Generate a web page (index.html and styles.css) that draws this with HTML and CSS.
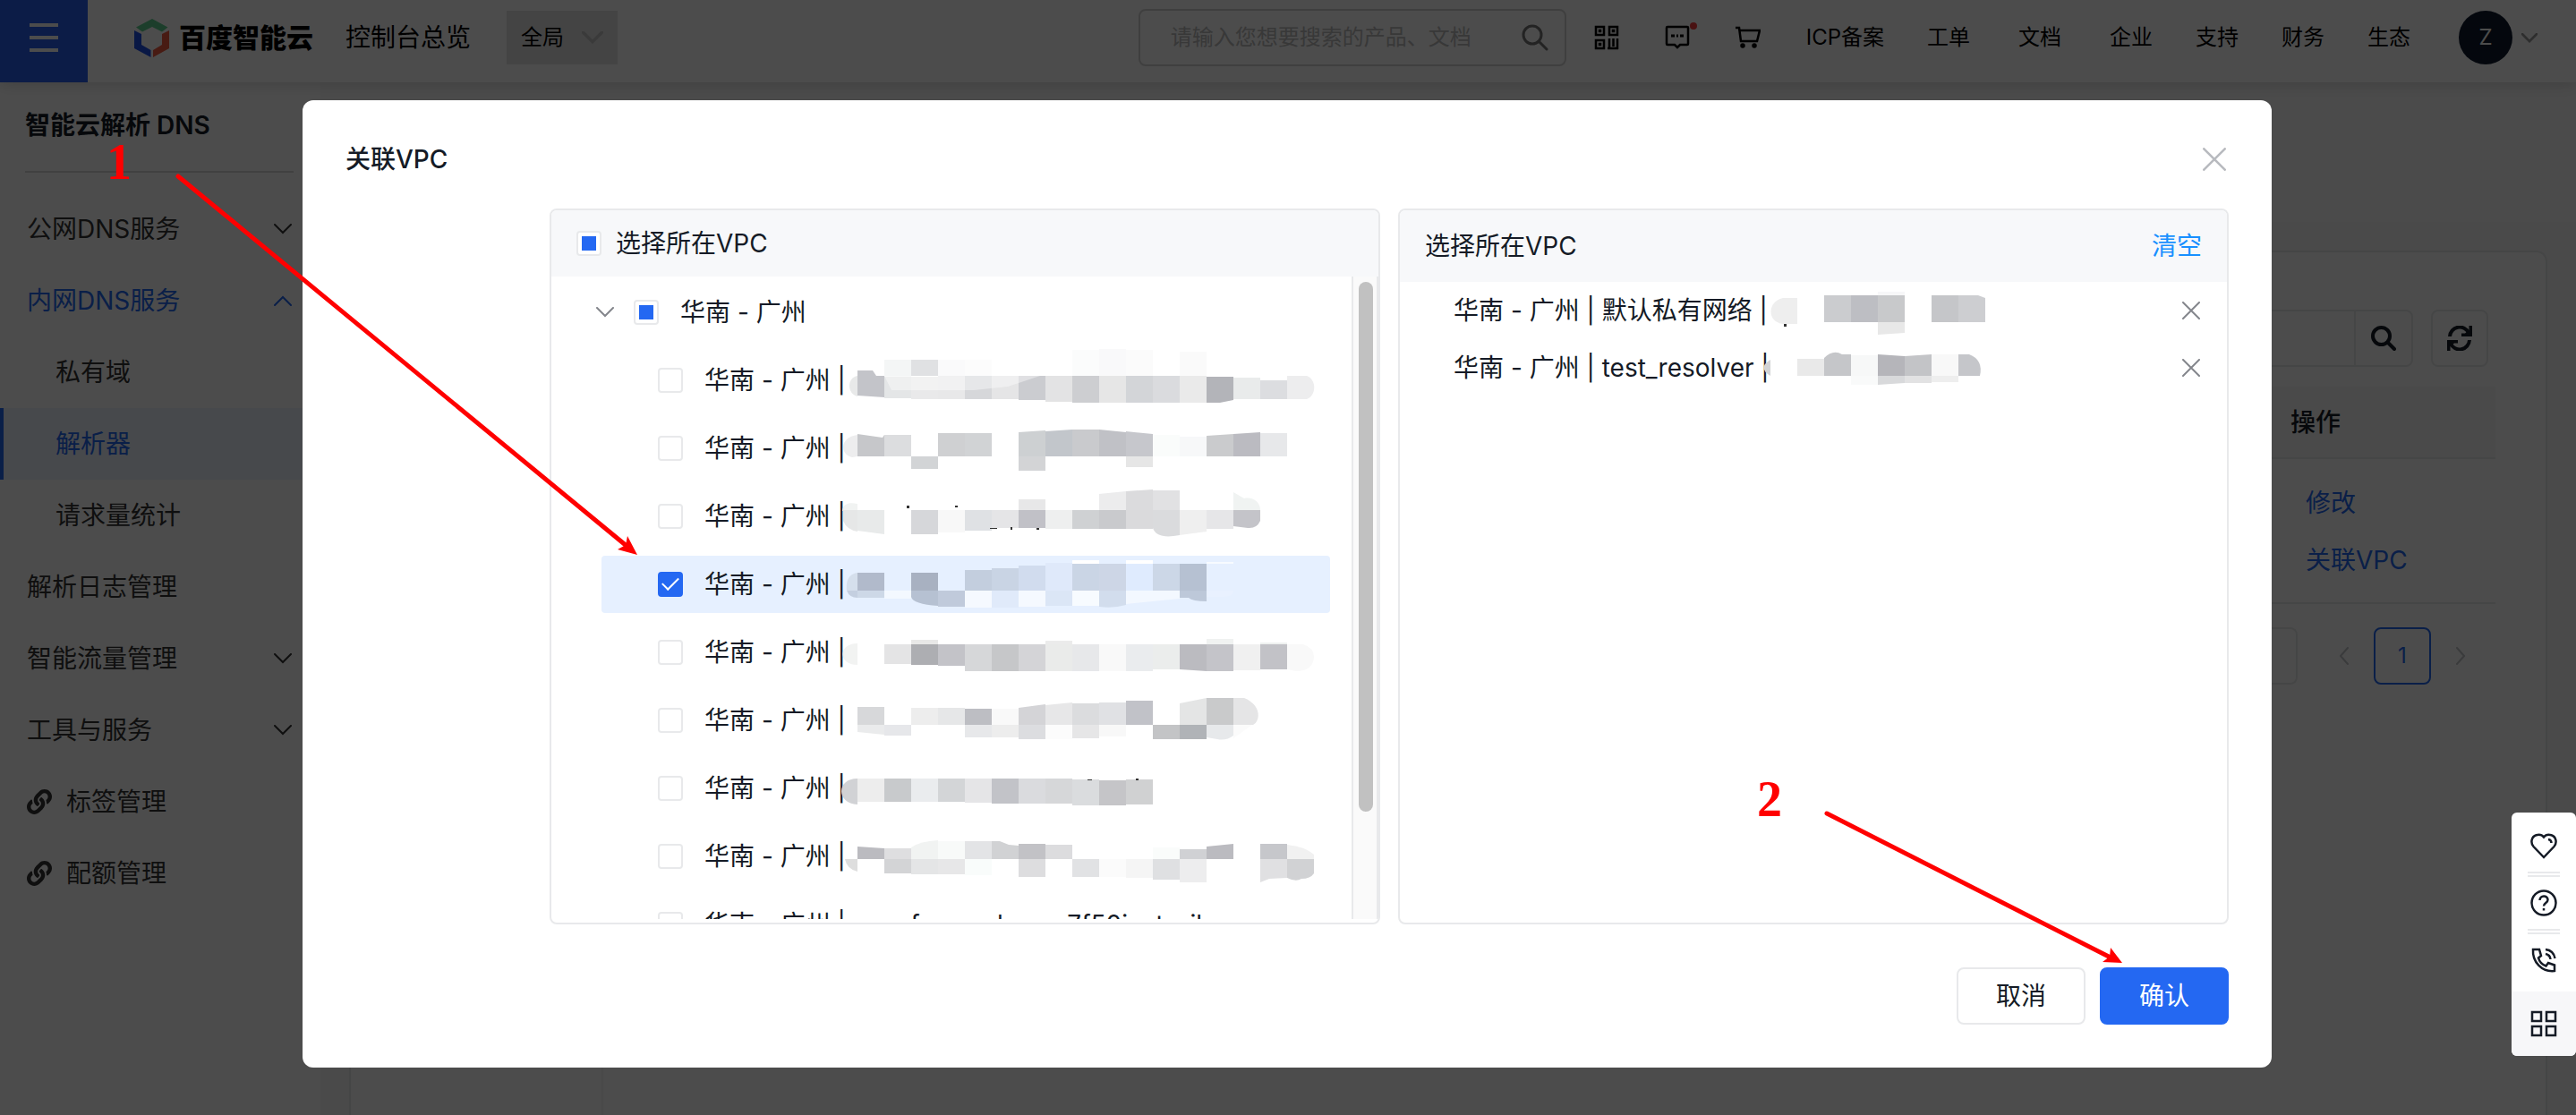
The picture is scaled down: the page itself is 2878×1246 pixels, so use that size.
FILE: index.html
```html
<!DOCTYPE html>
<html lang="zh-CN">
<head>
<meta charset="utf-8">
<meta name="viewport" content="width=device-width, initial-scale=1">
<title>智能云解析 DNS</title>
<link rel="stylesheet" href="styles.css">
</head>
<body>
    <!-- shared icons -->
    <svg class="sprite" aria-hidden="true">
        <symbol id="down" viewBox="0 0 20 12"><path d="M1 1l9 9 9-9"/></symbol>
        <symbol id="up" viewBox="0 0 20 12"><path d="M1 11l9-9 9 9"/></symbol>
        <symbol id="cross" viewBox="0 0 20 20"><path d="M1 1l18 18M19 1L1 19"/></symbol>
        <symbol id="link" viewBox="0 0 512 512"><path d="M326.612 185.391c59.747 59.809 58.927 155.698.36 214.59-.11.12-.24.25-.36.37l-67.2 67.2c-59.27 59.27-155.699 59.262-214.96 0-59.27-59.26-59.27-155.7 0-214.96l37.106-37.106c9.84-9.84 26.786-3.3 27.294 10.606.648 17.722 3.826 35.527 9.69 52.721 1.986 5.822.567 12.262-3.783 16.612l-13.087 13.087c-28.026 28.026-28.905 73.66-1.155 101.96 28.024 28.579 74.086 28.749 102.325.51l67.2-67.19c28.191-28.191 28.073-73.757 0-101.83-3.701-3.694-7.429-6.564-10.341-8.569a16.037 16.037 0 0 1-6.947-12.606c-.396-10.567 3.348-21.456 11.698-29.806l21.054-21.055c5.521-5.521 14.182-6.199 20.584-1.731a152.482 152.482 0 0 1 20.522 17.197zM467.547 44.449c-59.261-59.262-155.69-59.27-214.96 0l-67.2 67.2c-.12.12-.25.25-.36.37-58.566 58.892-59.387 154.781.36 214.59a152.454 152.454 0 0 0 20.521 17.196c6.402 4.468 15.064 3.789 20.584-1.731l21.054-21.055c8.35-8.35 12.094-19.239 11.698-29.806a16.037 16.037 0 0 0-6.947-12.606c-2.912-2.005-6.64-4.875-10.341-8.569-28.073-28.073-28.191-73.639 0-101.83l67.2-67.19c28.239-28.239 74.3-28.069 102.325.51 27.75 28.3 26.872 73.934-1.155 101.96l-13.087 13.087c-4.35 4.35-5.769 10.79-3.783 16.612 5.864 17.194 9.042 34.999 9.69 52.721.509 13.906 17.454 20.446 27.294 10.606l37.106-37.106c59.271-59.259 59.271-155.699.001-214.959z"/></symbol>
    </svg>

    <header class="topbar">
        <button class="menu-btn" aria-label="菜单"><span></span><span></span><span></span></button>
        <a class="logo" href="#">
            <svg width="39" height="43" viewBox="0 0 39 43">
                <path fill="#5fd08f" d="M2 9.5L20 0l17.500 9.500-6.500 5L20 9 9 14.500z"/>
                <path fill="#2150e8" d="M0 13l8 4v12l10.500 6v8L0 33z"/>
                <path fill="#f05a40" d="M39 13l-8 4v12l-10 6v8l18-10z"/>
            </svg>
            <span>百度智能云</span>
        </a>
        <a class="overview" href="#">控制台总览</a>
        <button class="region">全局 <svg class="line" width="24" height="14"><use href="#down"/></svg></button>

        <form class="search">
            <input type="text" aria-label="搜索" placeholder="请输入您想要搜索的产品、文档">
            <svg class="line" width="30" height="30" viewBox="0 0 30 30"><circle cx="12" cy="12" r="10"/><path d="M19 19l9 9"/></svg>
        </form>
        <div class="tools">
            <svg width="28" height="28" viewBox="0 0 28 28"><path d="M2 2h9v9H2zM17 2h9v9h-9zM2 17h9v9H2zM17 15v12M21.500 15v9M26 15v12M15 26h12"/><path d="M6 6h1v1H6zM21 6h1v1h-1zM6 21h1v1H6z"/></svg>
            <span class="notice">
                <svg width="28" height="28" viewBox="0 0 28 28"><path d="M3 2h22q1 0 1 1v18q0 1-1 1h-8l-3 3-3-3H3q-1 0-1-1V3q0-1 1-1z"/><path stroke-width="3" d="M7 12h4M13 12h2M17 12h4"/></svg>
                <i class="dot"></i>
            </span>
            <svg width="28" height="28" viewBox="0 0 28 28"><path d="M0 3h4l2 15h18l3-12H5"/><circle cx="8" cy="23" r="1.500"/><circle cx="21" cy="23" r="1.500"/></svg>
        </div>
        <nav class="top-links">
            <div class="links">
                <a href="#">ICP备案</a>
                <a href="#">工单</a>
            </div>
            <a href="#">文档</a>
            <div class="links">
                <a href="#">企业</a>
                <a href="#">支持</a>
                <a href="#">财务</a>
                <a href="#">生态</a>
            </div>
        </nav>
        <button class="user"><span class="avatar">Z</span><svg class="line" width="18" height="11"><use href="#down"/></svg></button>
    </header>

    <div class="page">
        <aside class="sidebar">
            <h2>智能云解析 DNS</h2>
            <nav>
                <a class="item" href="#">公网DNS服务 <svg class="line" width="20" height="12"><use href="#down"/></svg></a>
                <a class="item open" href="#">内网DNS服务 <svg class="line" width="20" height="12"><use href="#up"/></svg></a>
                <a class="item sub" href="#">私有域</a>
                <a class="item sub active" href="#">解析器</a>
                <a class="item sub" href="#">请求量统计</a>
                <a class="item" href="#">解析日志管理</a>
                <a class="item" href="#">智能流量管理 <svg class="line" width="20" height="12"><use href="#down"/></svg></a>
                <a class="item" href="#">工具与服务 <svg class="line" width="20" height="12"><use href="#down"/></svg></a>
                <a class="item ext" href="#"><svg width="28" height="28"><use href="#link"/></svg>标签管理</a>
                <a class="item ext" href="#"><svg width="28" height="28"><use href="#link"/></svg>配额管理</a>
            </nav>
        </aside>
        <main class="content">
            <div class="crumb"></div>
            <section class="card">
                <div class="card-nav"></div>
                <div class="card-main">
                    <div class="toolbar">
                        <div class="filter">
                            <input type="text" aria-label="筛选">
                            <button aria-label="搜索"><svg width="28" height="28" viewBox="0 0 28 28"><circle cx="11.500" cy="11.500" r="9.500"/><path d="M19 19l7 7"/></svg></button>
                        </div>
                        <button class="refresh" aria-label="刷新">
                            <svg width="28" height="28" viewBox="0 0 28 28"><path class="arc" d="M3 12A11 11 0 0 1 24 8M25 16A11 11 0 0 1 4 20"/><path d="M28 0v12H16V8.500h4L24.500 5V0zM0 28V16h12v3.500H8L3.500 23v5z"/></svg>
                        </button>
                    </div>
                    <table class="list">
                        <thead><tr><th></th><th class="ops">操作</th></tr></thead>
                        <tbody><tr><td></td><td class="ops"><a href="#">修改</a><a href="#">关联VPC</a></td></tr></tbody>
                    </table>
                    <div class="pager">
                        <span class="page-size"></span>
                        <button class="arrow" aria-label="上一页"><svg class="line" width="10" height="20" viewBox="0 0 10 20"><path d="M9 1L1 10l8 9"/></svg></button>
                        <button class="num">1</button>
                        <button class="arrow" aria-label="下一页"><svg class="line" width="10" height="20" viewBox="0 0 10 20"><path d="M1 1l8 9-8 9"/></svg></button>
                    </div>
                </div>
            </section>
        </main>
    </div>

    <div class="mask">
        <div class="dialog" role="dialog" aria-label="关联VPC">
            <div class="dialog-head">
                <h3>关联VPC</h3>
                <button class="close" aria-label="关闭"><svg class="line" width="26" height="26"><use href="#cross"/></svg></button>
            </div>
            <div class="transfer">
                <div class="panel">
                    <label class="panel-head source"><input type="checkbox" class="partial">选择所在VPC</label>
                    <div class="tree">
                        <div class="nodes">
                            <div class="group">
                                <svg class="line" width="20" height="12"><use href="#down"/></svg>
                                <label><input type="checkbox" class="partial">华南 - 广州</label>
                            </div>
                            <label class="node"><input type="checkbox"><span>华南 - 广州 |</span>
                                <svg class="mosaic" viewBox="0 0 530 64">
                                    <rect x="44" y="9" height="20" fill="#f4f6f6"/><rect x="74" y="9" height="18" fill="#e0e1e3"/><rect x="104" y="9" height="18" fill="#fafafb"/><rect x="134" y="9" height="18" fill="#fcfcfc"/><rect x="254" y="-2" height="29" fill="#fbfcfc"/><rect x="284" y="-3" height="30" fill="#f9f9fa"/><rect x="314" y="-2" height="29" fill="#fbfbfb"/><rect x="374" y="0" height="28" fill="#fafafa"/>
                                    <path fill="#e8e9e9" d="M14 27c-12 2-12 20 0 23z"/><path fill="#c3c4c9" d="M14 21h17l4 6h9v24l-30-2z"/>
                                    <rect x="44" y="28" height="24" fill="#e4e6e7"/><rect x="74" y="28" height="25" fill="#e9e9ea"/><rect x="104" y="27" height="26" fill="#e8e8e9"/><rect x="134" y="27" height="26" fill="#d6d7da"/><rect x="164" y="27" height="26" fill="#e5e5e6"/><rect x="194" y="27" height="27" fill="#cbccd0"/><rect x="224" y="27" height="29" fill="#e3e3e4"/><rect x="254" y="27" height="30" fill="#cdced1"/><rect x="284" y="27" height="30" fill="#e6e6e6"/><rect x="314" y="27" height="30" fill="#d3d5d8"/><rect x="344" y="27" height="30" fill="#dadbde"/><rect x="374" y="27" height="30" fill="#eaeaea"/><path fill="#b3b4b9" d="M404 28h30v26l-15 3h-15z"/><rect x="434" y="29" height="24" fill="#e9ebeb"/><rect x="464" y="32" height="21" fill="#dcdde0"/><path fill="#ededee" d="M494 27h22c11 4 11 22 0 26h-22z"/>
                                    <path fill="#fff" fill-opacity=".4" d="M44 27h174l-36 12-38 4H52z"/>
                                </svg>
                            </label>
                            <label class="node"><input type="checkbox"><span>华南 - 广州 |</span>
                                <svg class="mosaic" viewBox="0 0 530 64">
                                    <path fill="#ededee" d="M14 17c-20 2-20 22-6 25l6-1z"/><path fill="#c6c7ca" d="M14 16l28 4 2-3v24H14z"/><rect x="44" y="17" height="24" fill="#dcdddf"/><rect x="74" y="41" height="14" fill="#d2d4d6"/><rect x="104" y="15" height="26" fill="#cfd0d2"/><rect x="134" y="15" height="26" fill="#d1d3d5"/><path fill="#cdd0d2" d="M194 14l30-2v29h-30z"/><rect x="194" y="41" height="16" fill="#d3d4d6"/><path fill="#c2c6cb" d="M224 13l30-2v30h-30z"/><rect x="254" y="11" height="30" fill="#c9cacd"/><path fill="#c0c1c6" d="M284 11l30 3v27h-30z"/><path fill="#c6c7cc" d="M314 13l30 3v25h-30z"/><rect x="314" y="41" height="12" fill="#e6e6e6"/><rect x="344" y="17" height="24" fill="#fafcfb"/><rect x="374" y="19" height="22" fill="#f7f8f9"/><path fill="#cacbcd" d="M404 18l30-2v25h-30z"/><path fill="#bbbbc1" d="M434 16l30-2v27h-30z"/><rect x="464" y="15" height="26" fill="#e7e8ea"/>
                                </svg>
                            </label>
                            <label class="node"><input type="checkbox"><span>华南 - 广州 |</span>
                                <svg class="mosaic" viewBox="0 0 530 64">
                                    <path fill="#f1f3f2" d="M14 18c-10-2-16 0-17 8h17z"/><rect x="194" y="13" height="12" fill="#e7e7e8"/><path fill="#ececed" d="M284 7l30-3v21h-30z"/><path fill="#dbdbdd" d="M314 4l30-2v23h-30z"/><rect x="344" y="3" height="22" fill="#e1e1e3"/><path fill="#f0f3f2" d="M434 5l12 7c10-2 18 4 18 13h-30z"/>
                                    <path fill="#e6e7e7" d="M14 25H-2v12q4 10 16 12z"/><path fill="#e8eaea" d="M14 25h30v27l-30-4z"/><rect x="74" y="25" height="27" fill="#d6d7da"/><rect x="104" y="25" height="25" fill="#f8f8f8"/><rect x="134" y="25" height="23" fill="#dfe1e4"/><rect x="164" y="25" height="20" fill="#e5e5e7"/><rect x="194" y="25" height="20" fill="#c1c1c7"/><rect x="224" y="25" height="21" fill="#eeefef"/><rect x="254" y="25" height="21" fill="#cfd1d3"/><rect x="284" y="25" height="21" fill="#c9cacd"/><rect x="314" y="25" height="21" fill="#dadadc"/><path fill="#dadbdd" d="M344 25h30v28q-26 5-30-8z"/><path fill="#efefef" d="M374 25h30v24l-30 4z"/><rect x="404" y="25" height="21" fill="#e6e6e8"/><path fill="#c4c4c9" d="M434 25h30v12q-4 9-14 8l-16-2z"/>
                                    <path fill="#333" d="M69 20h3v3h-3zM123 20h3v2h-3zM162 45h8v1h-8zM185 44h2v3h-2zM214 45h3v2h-3z"/>
                                </svg>
                            </label>
                            <label class="node selected"><input type="checkbox" checked><span>华南 - 广州 |</span>
                                <svg class="mosaic" viewBox="0 0 530 64">
                                    <path fill="#d5dfec" d="M14 19c-14 2-12 16-12 20h12z"/><rect x="14" y="19" height="20" fill="#b1bacb"/><rect x="74" y="19" height="20" fill="#a8b1c1"/><rect x="134" y="16" height="23" fill="#c3cede"/><rect x="164" y="14" height="25" fill="#c9d4e4"/><rect x="194" y="11" height="28" fill="#d1dcee"/><rect x="224" y="8" height="31" fill="#dfe9fa"/><rect x="254" y="9" height="30" fill="#cad5e5"/><rect x="284" y="9" height="30" fill="#cdd6e6"/><rect x="314" y="9" height="30" fill="#dfebfe"/><rect x="344" y="9" height="30" fill="#ccd7e7"/><rect x="374" y="9" height="30" fill="#b6c1d2"/><rect x="254" y="5" height="4" fill="#fff"/><rect x="314" y="5" height="4" fill="#fff"/><rect x="404" y="7" height="2" fill="#f7fbff"/>
                                    <path fill="#c4cfe0" d="M14 39H2q3 8 12 8z"/><rect x="14" y="39" height="8" fill="#cdd8e7"/><rect x="44" y="39" height="9" fill="#f3f8ff"/><path fill="#b6c1d2" d="M74 39h30v17q-28-2-30-10z"/><rect x="104" y="39" height="18" fill="#c0cadb"/><rect x="134" y="39" height="19" fill="#f5f9ff"/><rect x="164" y="39" height="19" fill="#e0eafa"/><rect x="194" y="39" height="18" fill="#f5f9ff"/><rect x="224" y="39" height="17" fill="#dbe6f6"/><rect x="254" y="39" height="17" fill="#f7fbff"/><path fill="#d2dded" d="M284 39h30v16q-14 4-30 2z"/><path fill="#f3f8ff" d="M314 39h60v9l-60 6z"/><path fill="#bdc8d9" d="M374 39h30v12q-16 0-20-4h-10z"/><path fill="#e9f1ff" d="M404 39h30q0 6-10 7h-20z"/>
                                </svg>
                            </label>
                            <label class="node"><input type="checkbox"><span>华南 - 广州 |</span>
                                <svg class="mosaic" viewBox="0 0 530 64">
                                    <rect x="74" y="18" height="5" fill="#e8e8e7"/><rect x="224" y="19" height="4" fill="#ebebeb"/><rect x="404" y="17" height="6" fill="#f0f2f1"/><rect x="464" y="21" height="3" fill="#eff1f0"/>
                                    <path fill="#f2f3f2" d="M14 22c-22 0-22 24 0 24z"/><rect x="44" y="23" height="22" fill="#e4e4e5"/><rect x="74" y="23" height="23" fill="#adaeb2"/><rect x="104" y="23" height="24" fill="#c3c3c8"/><rect x="134" y="23" height="30" fill="#d6d7d9"/><rect x="164" y="23" height="30" fill="#c6c7c9"/><rect x="194" y="23" height="30" fill="#d4d4d7"/><rect x="224" y="23" height="30" fill="#eaebea"/><rect x="254" y="23" height="30" fill="#e7e8ea"/><rect x="284" y="23" height="30" fill="#f9f9f9"/><rect x="314" y="23" height="30" fill="#eaecee"/><rect x="344" y="23" height="28" fill="#ebedec"/><path fill="#bbbbc0" d="M374 23h30v30l-30-2z"/><rect x="404" y="23" height="30" fill="#c4c4c9"/><rect x="434" y="23" height="29" fill="#f0f0f0"/><rect x="464" y="23" height="28" fill="#c2c2c7"/><path fill="#f9f9f9" d="M494 23h18q12 4 12 14-1 16-20 16l-10-2z"/>
                                </svg>
                            </label>
                            <label class="node"><input type="checkbox"><span>华南 - 广州 |</span>
                                <svg class="mosaic" viewBox="0 0 530 64">
                                    <rect x="14" y="17" height="20" fill="#d7d8da"/><rect x="74" y="18" height="19" fill="#ededed"/><rect x="104" y="18" height="19" fill="#e6e7e8"/><rect x="134" y="19" height="18" fill="#bdbec3"/><rect x="164" y="19" height="18" fill="#f9f9f9"/><path fill="#d4d4d7" d="M194 18l30-4v23h-30z"/><path fill="#e7e7e8" d="M224 15l30-3v25h-30z"/><rect x="254" y="13" height="24" fill="#dbdcde"/><rect x="284" y="12" height="25" fill="#e0e1e4"/><rect x="314" y="10" height="27" fill="#c1c2c8"/><path fill="#e4e5e5" d="M374 13l30-6v30h-30z"/><rect x="404" y="7" height="30" fill="#c9cacb"/><path fill="#e5e5e6" d="M434 7h12c20 8 18 26 10 30h-22z"/>
                                    <path fill="#eaebec" d="M14 37h30v11l-30-3z"/><rect x="44" y="37" height="12" fill="#e6e7ea"/><rect x="134" y="37" height="14" fill="#e7e8ea"/><rect x="164" y="37" height="14" fill="#ededed"/><rect x="194" y="37" height="16" fill="#dcdde0"/><rect x="224" y="37" height="16" fill="#fcfcfc"/><rect x="254" y="37" height="15" fill="#e6e6e7"/><rect x="284" y="37" height="13" fill="#f8f8f8"/><rect x="344" y="37" height="16" fill="#c3c4c6"/><rect x="374" y="37" height="16" fill="#b0b3b7"/><path fill="#e7e9eb" d="M404 37h30v12q-8 6-18 4l-12-2z"/><path fill="#fbfbfb" d="M434 37h21l-21 15z"/>
                                </svg>
                            </label>
                            <label class="node"><input type="checkbox"><span>华南 - 广州 |</span>
                                <svg class="mosaic" viewBox="0 0 530 64">
                                    <path fill="#d1d2d5" d="M14 21c-24 0-24 28 0 29z"/><rect x="14" y="21" height="26" fill="#ededed"/><rect x="44" y="21" height="26" fill="#c8cacc"/><rect x="74" y="21" height="26" fill="#eaecee"/><rect x="104" y="21" height="26" fill="#d3d5d7"/><rect x="134" y="21" height="27" fill="#e5e5e7"/><rect x="164" y="21" height="28" fill="#c2c3c8"/><rect x="194" y="21" height="28" fill="#dadbde"/><rect x="224" y="21" height="28" fill="#d6d7d9"/><rect x="254" y="22" height="29" fill="#dadcde"/><rect x="284" y="23" height="28" fill="#c5c5c8"/><rect x="314" y="22" height="28" fill="#d0d1d2"/>
                                    <path fill="#333" d="M271 22h5v1h-5zM325 21h3v2h-3z"/>
                                </svg>
                            </label>
                            <label class="node"><input type="checkbox"><span>华南 - 广州 |</span>
                                <svg class="mosaic" viewBox="0 0 530 64">
                                    <path fill="#bbbbc0" d="M14 21l30 2v12H14z"/><rect x="44" y="23" height="12" fill="#dedee0"/><path fill="#f1f3f2" d="M74 22q10-7 30-8v21H74z"/><rect x="104" y="15" height="20" fill="#f8faf9"/><rect x="134" y="15" height="20" fill="#e3e4e6"/><path fill="#d1d2d4" d="M164 15h9l10 4 11 1v15h-30z"/><rect x="194" y="18" height="17" fill="#c2c2c6"/><rect x="224" y="19" height="16" fill="#dcdcde"/><rect x="344" y="22" height="13" fill="#fafcfb"/><rect x="374" y="24" height="11" fill="#d0d1d4"/><path fill="#bbbbc0" d="M404 21l30-3v17h-30z"/><rect x="464" y="18" height="17" fill="#c6c7cb"/><path fill="#f1f1f1" d="M494 19q20 2 30 11v5h-30z"/>
                                    <path fill="#dedede" d="M0 35h14v14Q2 46 0 35z"/><rect x="44" y="35" height="16" fill="#d3d4d6"/><rect x="74" y="35" height="17" fill="#e4e5e6"/><rect x="104" y="35" height="17" fill="#e7e7e8"/><rect x="134" y="35" height="18" fill="#f9fcfb"/><rect x="194" y="35" height="20" fill="#dddddf"/><rect x="254" y="35" height="20" fill="#e1e2e4"/><rect x="284" y="35" height="20" fill="#fbfbfb"/><rect x="314" y="35" height="21" fill="#f5f5f5"/><rect x="344" y="35" height="23" fill="#dfe0e2"/><rect x="374" y="35" height="26" fill="#ededee"/><path fill="#e0e0e2" d="M464 35h30v21l-20 1-10 4z"/><path fill="#d1d2d4" d="M494 35h30v16q-4 6-14 6-6 4-16-1z"/>
                                </svg>
                            </label>
                            <label class="node"><input type="checkbox"><span>华南 - 广州 | onesf-resoub-env7f50inste-il</span></label>
                        </div>
                        <div class="track"><div class="thumb"></div></div>
                    </div>
                </div>

                <div class="panel">
                    <div class="panel-head target">选择所在VPC <button class="clear">清空</button></div>
                    <ul class="picked">
                        <li><span>华南 - 广州 | 默认私有网络 |</span>
                            <svg class="mosaic" viewBox="0 0 300 64">
                                <path fill="#eee" d="M36 18H20c-18 4-18 27 0 29h16z"/><path fill="#333" d="M21 47h3v3h-3z"/><rect x="66" y="15" height="30" fill="#cbcccf"/><rect x="96" y="15" height="30" fill="#bdbec3"/><rect x="126" y="11" height="4" fill="#f7f7f8"/><rect x="126" y="15" height="30" fill="#c8c9cb"/><path fill="#e8e8e8" d="M126 45h30v12l-30 2z"/><rect x="186" y="15" height="30" fill="#c5c6c9"/><path fill="#cdced1" d="M216 15h22l8 3v27h-30z"/>
                            </svg>
                            <button aria-label="移除"><svg class="line" width="20" height="20"><use href="#cross"/></svg></button>
                        </li>
                        <li><span>华南 - 广州 | test_resolver |</span>
                            <svg class="mosaic" viewBox="0 0 300 64">
                                <path fill="#d2d3d5" d="M6 23q-15 9 0 18z"/><rect x="36" y="22" height="19" fill="#e9e9e9"/><path fill="#c5c6c9" d="M66 21q10-10 20-4h10v24H66z"/><rect x="96" y="18" height="23" fill="#f7f8f8"/><path fill="#b5b5ba" d="M126 17l30 2v22h-30z"/><path fill="#c3c4c7" d="M156 19l30-2v24h-30z"/><rect x="186" y="17" height="24" fill="#f8f8f8"/><path fill="#c5c6ca" d="M216 17h12q16 6 12 24h-24z"/><rect x="96" y="41" height="10" fill="#f9fafa"/><path fill="#d8d9db" d="M126 41h30v8l-30 2z"/><rect x="156" y="41" height="8" fill="#e2e2e3"/><rect x="186" y="41" height="7" fill="#eee"/>
                            </svg>
                            <button aria-label="移除"><svg class="line" width="20" height="20"><use href="#cross"/></svg></button>
                        </li>
                    </ul>
                </div>
            </div>
            <div class="dialog-foot">
                <button class="btn">取消</button>
                <button class="btn primary">确认</button>
            </div>
        </div>
    </div>

    <div class="float-bar">
        <button aria-label="收藏"><svg width="30" height="30" viewBox="0 0 30 30"><path d="M15 28L3.500 16C0 12 1 5 6.500 3.300 10 2.200 13 3 15 5.500 17 3 20 2.200 23.500 3.300 29 5 30 12 26.500 16z"/><path d="M20 8q3.500.5 3.500 4"/></svg></button>
        <button aria-label="帮助"><svg width="30" height="30" viewBox="0 0 30 30"><circle cx="15" cy="15" r="13.500"/><path d="M10.500 12c0-6 9-6 9-.5 0 3.500-4.500 3.500-4.500 7M15 21v2.500"/></svg></button>
        <button class="last" aria-label="电话"><svg width="30" height="30" viewBox="0 0 30 30"><path d="M3 3h7l2 7-3 2.500c1 4 4.500 7.500 8.500 9L20 18l7 2.500V27C13 28.500 2 17 3 3z"/><path d="M17 8q5 1 5.500 6M17 3q9 1 10.500 10"/></svg></button>
        <button class="more" aria-label="更多"><svg width="30" height="30" viewBox="0 0 30 30"><path d="M2 2h10v10H2zM18 2h10v10H18zM2 18h10v10H2zM18 18h10v10H18z"/></svg></button>
    </div>

    <!-- step arrows over the page -->
    <svg class="steps" width="2878" height="1246" viewBox="0 0 2878 1246">
        <path class="shaft" d="M199 197L700 610M2041 909L2356 1069"/>
        <path d="M712 620L690 614 699 609 701 599zM2371 1076L2349 1075 2357 1069 2358 1059z"/>
        <text x="119" y="200">1</text>
        <text x="1963" y="912">2</text>
    </svg>
</body>
</html>
```

FILE: styles.css
```css
* {
  box-sizing: border-box;
}

body {
  margin: 0;
  height: 100vh;
  overflow: hidden;
  display: flex;
  flex-direction: column;
  font-family: Inter, "Noto Sans CJK SC", sans-serif;
  font-size: 28px;
  line-height: 40px;
  color: #151b26;
  background: #fff;
}

a {
  color: inherit;
  text-decoration: none;
}

button, input {
  font: inherit;
  color: inherit;
}

button {
  background: none;
  border: none;
  padding: 0;
  cursor: pointer;
}

svg {
  display: block;
  flex-shrink: 0;
}

.sprite {
  display: none;
}

.line {
  fill: none;
  stroke: currentColor;
  stroke-width: 2;
  stroke-linecap: round;
}

/* top bar */
.topbar {
  height: 92px;
  flex-shrink: 0;
  display: flex;
  align-items: center;
  padding: 0 43px 8px 0;
  background: #fff;
  box-shadow: 0 2px 16px rgba(0, 0, 0, 0.16);
  position: relative;
  z-index: 1;
  font-size: 24px;
  color: #000;
}

.menu-btn {
  align-self: flex-start;
  width: 98px;
  height: 92px;
  background: #2b60ee;
  display: flex;
  flex-direction: column;
  align-items: center;
  justify-content: center;
  gap: 10px;
  padding-bottom: 8px;
}

.menu-btn span {
  width: 32px;
  height: 4px;
  background: #fff;
}

.logo {
  display: flex;
  align-items: center;
  gap: 11px;
  margin-left: 52px;
  font-size: 30px;
  font-weight: 900;
}

.overview {
  margin-left: 36px;
  font-size: 28px;
}

.region {
  display: flex;
  align-items: center;
  gap: 20px;
  width: 124px;
  height: 60px;
  margin-left: 40px;
  padding-left: 16px;
  background: #e5e5e5;
}

.region svg {
  color: #c4c4c4;
  stroke-width: 3;
}

.user svg {
  color: #999;
  stroke-width: 3;
}

.search {
  display: flex;
  align-items: center;
  width: 478px;
  height: 64px;
  margin-left: auto;
  padding: 0 18px 0 34px;
  border: 2px solid #d4d4d4;
  border-radius: 8px;
}

.search input {
  flex: 1;
  min-width: 0;
  padding: 0;
  border: none;
  outline: none;
  background: none;
}

.search input::placeholder {
  color: #bbb;
}

.search svg {
  color: #777;
  stroke-width: 3;
}

.tools {
  display: flex;
  gap: 51px;
  margin: 0 51px 0 31px;
  fill: none;
  stroke: #000;
  stroke-width: 2.5;
}

.notice {
  position: relative;
}

.dot {
  position: absolute;
  top: -3px;
  right: -8px;
  width: 8px;
  height: 8px;
  border-radius: 50%;
  background: #f33e3e;
}

.top-links {
  display: flex;
  gap: 54px;
  margin-right: 54px;
}

.links {
  display: flex;
  gap: 48px;
}

.user {
  display: flex;
  align-items: center;
  gap: 10px;
}

.avatar {
  width: 60px;
  height: 60px;
  line-height: 60px;
  border-radius: 50%;
  background: #0e1a2e;
  color: #fff;
}

/* page */
.page {
  flex: 1;
  display: flex;
}

.sidebar {
  width: 358px;
  flex-shrink: 0;
  color: #333;
  box-shadow: 2px 0 8px rgba(0, 0, 0, 0.1);
}

.sidebar h2 {
  margin: 0 30px 23px 28px;
  padding: 28px 0 31px;
  border-bottom: 2px solid #d9d9d9;
  font-size: 28px;
  font-weight: 600;
  color: #151b26;
}

.item {
  display: flex;
  align-items: center;
  justify-content: space-between;
  height: 80px;
  padding: 0 32px 0 30px;
}

.sub {
  padding-left: 62px;
}

.open, .active {
  color: #2468f2;
}

.active {
  background: #edf3ff;
  border-left: 4px solid #2468f2;
  padding-left: 58px;
}

.ext {
  justify-content: flex-start;
  gap: 16px;
  fill: #333;
}

.content {
  flex: 1;
  display: flex;
  flex-direction: column;
  background: #f7f7f9;
}

.crumb {
  height: 156px;
  background: #fbfbfb;
}

.card {
  flex: 1;
  display: flex;
  margin: 32px 32px 0;
  background: #fff;
  border: 2px solid #e8e9eb;
  border-bottom: none;
  border-radius: 12px 12px 0 0;
}

.card-nav {
  width: 282px;
  border-right: 2px solid #f5f5f5;
}

.card-main {
  flex: 1;
  padding: 64px 56px 0;
}

.toolbar {
  display: flex;
  justify-content: flex-end;
  gap: 20px;
  padding-right: 8px;
  margin-bottom: 22px;
}

.filter {
  display: flex;
  width: 480px;
  height: 64px;
  border: 2px solid #e8e9eb;
  border-radius: 8px;
}

.filter input {
  flex: 1;
  min-width: 0;
  border: none;
  background: none;
}

.filter button, .refresh {
  width: 64px;
  display: flex;
  align-items: center;
  justify-content: center;
}

.filter button {
  border-left: 2px solid #e8e9eb;
  fill: none;
  stroke: #151b26;
  stroke-width: 4;
  stroke-linecap: round;
}

.refresh {
  border: 2px solid #e8e9eb;
  border-radius: 8px;
  fill: #151b26;
}

.arc {
  fill: none;
  stroke: #151b26;
  stroke-width: 4;
}

.list {
  width: 100%;
  border-collapse: collapse;
}

.list th {
  height: 80px;
  background: #f7f7f9;
  font-weight: 500;
  text-align: left;
}

.list th, .list td {
  border-bottom: 2px solid #e8e9eb;
}

.list .ops {
  width: 253px;
  padding: 0 0 0 24px;
}

.list td.ops {
  padding: 17px 0 15px 41px;
}

.ops a {
  display: block;
  line-height: 64px;
  color: #2468f2;
}

.pager {
  display: flex;
  align-items: center;
  justify-content: flex-end;
  gap: 28px;
  margin-top: 26px;
  padding-right: 34px;
}

.page-size {
  width: 160px;
  height: 64px;
  margin-right: 19px;
  border: 2px solid #e8e9eb;
  border-radius: 8px;
}

.arrow {
  color: #c4c6ca;
}

.num {
  width: 64px;
  height: 64px;
  border: 2px solid #2468f2;
  border-radius: 8px;
  font-size: 24px;
  color: #2468f2;
}

/* dialog */
.mask {
  position: fixed;
  inset: 0;
  z-index: 10;
  display: flex;
  justify-content: center;
  align-items: flex-start;
  padding: 112px 2px 0 0;
  background: rgba(0, 0, 0, 0.7);
}

.dialog {
  width: 90%;
  max-width: 2200px;
  padding: 48px;
  border-radius: 12px;
  background: #fff;
}

.dialog-head {
  display: flex;
  align-items: center;
  justify-content: space-between;
  height: 36px;
  margin-bottom: 37px;
}

.dialog-head h3 {
  margin: 0;
  font-size: 28px;
  font-weight: 500;
}

.close {
  margin-right: 3px;
  color: #b8babf;
}

.transfer {
  display: grid;
  grid-template-columns: 1fr 1fr;
  gap: 20px;
  margin-left: 228px;
}

.panel {
  height: 800px;
  display: flex;
  flex-direction: column;
  overflow: hidden;
  border: 2px solid #e8e9eb;
  border-radius: 8px;
}

.panel-head {
  display: flex;
  align-items: center;
  flex-shrink: 0;
  background: #f7f8fa;
}

.source {
  height: 74px;
  padding-left: 28px;
  gap: 16px;
}

.target {
  height: 80px;
  padding: 0 28px;
  justify-content: space-between;
}

.clear {
  color: #1890ff;
}

input[type=checkbox] {
  appearance: none;
  width: 28px;
  height: 28px;
  margin: 0;
  flex-shrink: 0;
  display: grid;
  place-items: center;
  border: 2px solid #e8e9eb;
  border-radius: 4px;
  background: #fff;
}

.partial::before {
  content: "";
  width: 16px;
  height: 16px;
  background: #2468f2;
}

input[type=checkbox]:checked {
  background: #2468f2;
  border-color: #2468f2;
}

input[type=checkbox]:checked::before {
  content: "";
  width: 16px;
  height: 8px;
  border: solid #fff;
  border-width: 0 0 2px 2px;
  transform: translateY(-3px) rotate(-45deg);
}

.tree {
  height: 718px;
  display: flex;
  overflow: hidden;
}

.nodes {
  flex: 1;
  padding: 8px 24px 0 0;
}

.group, .node {
  display: flex;
  align-items: center;
  height: 64px;
  margin-bottom: 12px;
  white-space: nowrap;
}

.group {
  padding-left: 50px;
  gap: 22px;
}

.group > svg {
  color: #84868c;
}

.group label {
  display: flex;
  align-items: center;
  gap: 24px;
}

.node {
  margin-left: 56px;
  padding-left: 63px;
  border-radius: 4px;
}

.node span {
  width: 157px;
  margin-left: 24px;
}

.selected {
  background: #e6f0ff;
}

.mosaic {
  width: 530px;
  height: 64px;
  overflow: visible;
}

.mosaic rect {
  width: 30px;
}

.track {
  width: 30px;
  padding: 6px 8px;
  border-left: 2px solid #e8e9eb;
  border-right: 2px solid #e8e9eb;
  background: #fafafa;
}

.thumb {
  width: 16px;
  height: 592px;
  margin-left: -2px;
  border-radius: 8px;
  background: #c1c1c1;
}

.picked {
  list-style: none;
  margin: 0;
  padding: 0 30px 0 60px;
}

.picked li {
  display: flex;
  align-items: center;
  height: 64px;
}

.picked span {
  width: 348px;
  white-space: nowrap;
}

.picked .mosaic {
  width: 300px;
}

.picked button {
  margin-left: auto;
  color: #84868c;
}

.dialog-foot {
  display: flex;
  justify-content: flex-end;
  gap: 16px;
  margin-top: 48px;
}

.btn {
  width: 144px;
  height: 64px;
  border: 2px solid #e8e9eb;
  border-radius: 8px;
}

.primary {
  background: #2468f2;
  border-color: #2468f2;
  color: #fff;
}

/* floating tools on the right edge */
.float-bar {
  position: fixed;
  top: 908px;
  right: 0;
  z-index: 11;
  width: 72px;
  padding-top: 8px;
  display: flex;
  flex-direction: column;
  align-items: center;
  overflow: hidden;
  border-radius: 6px;
  background: #fff;
  fill: none;
  stroke: #151b26;
  stroke-width: 2.5;
}

.float-bar button {
  width: 36px;
  height: 64px;
  display: flex;
  align-items: center;
  justify-content: center;
  border-bottom: 6px double #e8e9eb;
}

.float-bar .last {
  border-color: transparent;
}

.float-bar .more {
  width: 72px;
  height: 72px;
  border: none;
  background: #f7f7f9;
}

.steps {
  position: absolute;
  top: 0;
  left: 0;
  z-index: 12;
  pointer-events: none;
  fill: #f00;
  font: bold 56px "Liberation Serif", serif;
}

.shaft {
  stroke: #f00;
  stroke-width: 5;
  stroke-linecap: round;
}
```
